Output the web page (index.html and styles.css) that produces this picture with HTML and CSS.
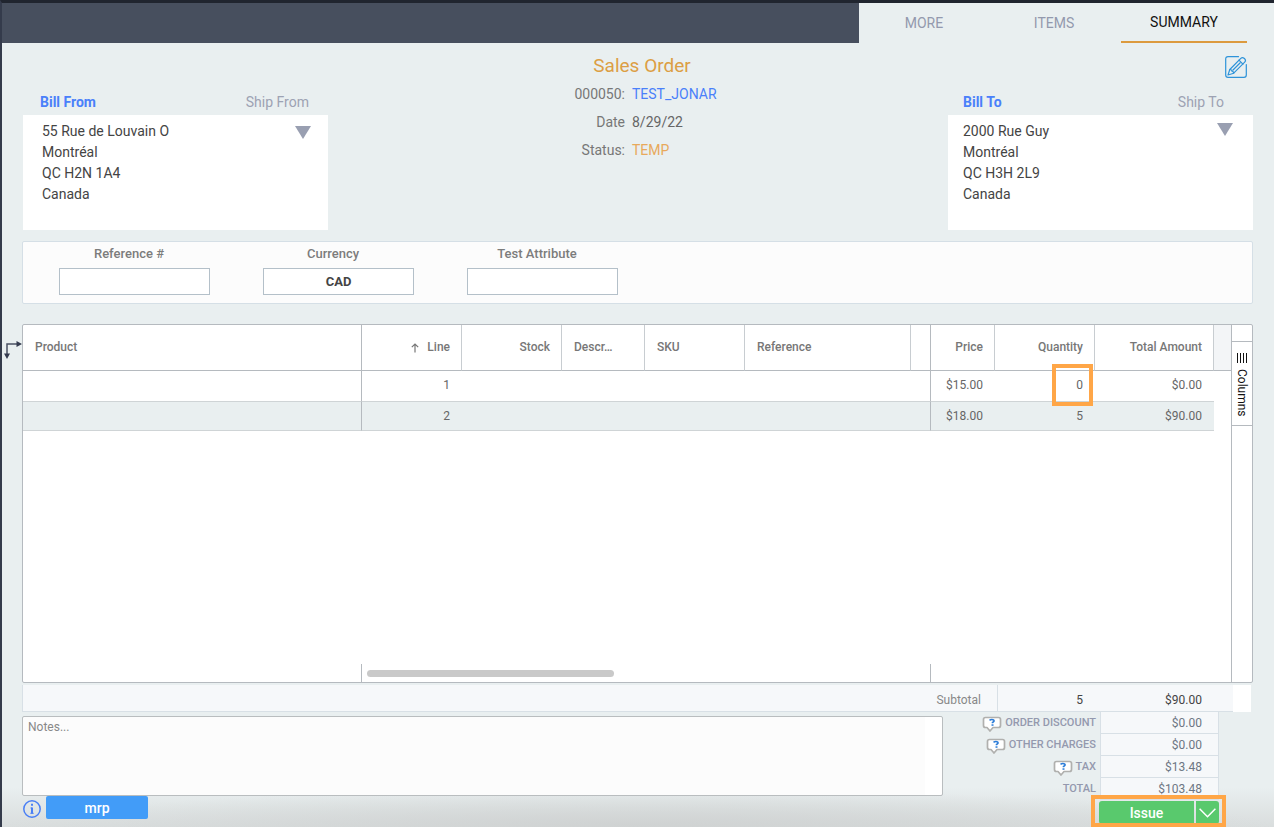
FILE: index.html
```html
<!DOCTYPE html>
<html lang="en">
<head>
<meta charset="utf-8">
<meta name="viewport" content="width=device-width, initial-scale=1">
<title>Sales Order</title>
<link rel="stylesheet" href="styles.css">
</head>
<body>
<svg width="0" height="0" class="defs" aria-hidden="true">
  <symbol id="help" viewBox="0 0 20 16">
    <path d="M4 1.500h12.500q2 0 2 2v6q0 2-2 2H11L8 15l-3-3.500H3.500q-2 0-2-2v-6q0-2 2-2z" fill="#fff" stroke="#b0b0ae" stroke-width="1.700" stroke-linejoin="round"/>
    <path d="M7.500 4.200q2.500-1.400 4.300 0 .9 1.200-1.300 2.200v.9" fill="none" stroke="#2b7cd8" stroke-width="1.600"/>
    <path d="M9.500 8.300h2v1.500h-2z" fill="#2b7cd8"/>
  </symbol>
</svg>
<header class="topbar">
  <div class="topbar-fill"></div>
  <nav class="tabs">
    <a class="tab" href="#more">MORE</a>
    <a class="tab" href="#items">ITEMS</a>
    <a class="tab tab-active" href="#summary">SUMMARY</a>
  </nav>
</header>
<main class="page">
  <section class="order-head">
    <div class="party party-from">
      <div class="party-tabs">
        <button class="party-tab party-tab-active" type="button">Bill From</button>
        <button class="party-tab" type="button">Ship From</button>
      </div>
      <div class="card">
        <address class="address">55 Rue de Louvain O<br>Montréal<br>QC H2N 1A4<br>Canada</address>
        <button class="card-toggle" type="button" aria-label="Choose billing address"></button>
      </div>
    </div>
    <div class="order-info">
      <h1 class="title">Sales Order</h1>
      <dl class="facts">
        <dt>000050:</dt><dd><a class="customer" href="#customer">TEST_JONAR</a></dd>
        <dt>Date</dt><dd>8/29/22</dd>
        <dt>Status:</dt><dd class="status">TEMP</dd>
      </dl>
    </div>
    <div class="party party-to">
      <button class="edit" type="button" aria-label="Edit">
        <svg width="22" height="22" viewBox="0 0 22 22" fill="none" stroke="#2e93d9" stroke-width="1.200" stroke-linejoin="round" stroke-linecap="round">
          <path d="M13.500.7H3Q.7.700.7 3v16Q.7 21.300 3 21.300h16q2.300 0 2.300-2.300V8.500"/>
          <path d="M3 19l1.800-5.500L15.800 2.300q1.600-1.600 3.600.2 2 2 .3 3.700L8.700 17.200z"/>
          <path d="M14 4.200l3.900 4M4.800 13.500l1.700.5.700 1.500 1.200.4.300 1.300M15 7L8 14"/>
        </svg>
      </button>
      <div class="party-tabs">
        <button class="party-tab party-tab-active" type="button">Bill To</button>
        <button class="party-tab" type="button">Ship To</button>
      </div>
      <div class="card">
        <address class="address">2000 Rue Guy<br>Montréal<br>QC H3H 2L9<br>Canada</address>
        <button class="card-toggle" type="button" aria-label="Choose customer address"></button>
      </div>
    </div>
  </section>

  <section class="attributes">
    <div class="field"><label class="field-label" for="reference">Reference #</label><input class="field-input" id="reference" type="text"></div>
    <div class="field"><label class="field-label" for="currency">Currency</label><input class="field-input" id="currency" type="text" value="CAD"></div>
    <div class="field"><label class="field-label" for="attribute">Test Attribute</label><input class="field-input" id="attribute" type="text"></div>
  </section>

  <section class="grid">
    <svg class="flow-icon" width="18" height="20" viewBox="0 0 18 20" aria-hidden="true">
      <path d="M3 15V4h10" fill="none" stroke="#4a5163" stroke-width="1.500"/>
      <path d="M12.500 1v6L18 4zM0 13.500h6L3 19z" fill="#343b4f"/>
    </svg>
    <div class="grid-main">
      <table class="lines">
        <colgroup>
          <col><col class="w-100"><col class="w-100"><col class="w-83"><col class="w-100"><col class="w-166"><col class="w-20"><col class="w-64"><col class="w-100"><col class="w-120"><col class="w-17">
        </colgroup>
        <thead>
          <tr>
            <th class="pin">Product</th>
            <th class="num"><svg class="sort" width="8" height="10" viewBox="0 0 8 10" fill="none" stroke="#777" stroke-width="1.200"><path d="M4 9.500V1M.8 4.200L4 1l3.200 3.200"/></svg>Line</th>
            <th class="num">Stock</th><th>Descr…</th><th>SKU</th><th>Reference</th><th class="pin"></th>
            <th class="num">Price</th><th class="num">Quantity</th><th class="num">Total Amount</th><th class="filler"></th>
          </tr>
        </thead>
        <tbody>
          <tr class="row"><td class="pin"></td><td class="num">1</td><td></td><td></td><td></td><td></td><td class="pin"></td><td class="num">$15.00</td><td class="num marked">0</td><td class="num">$0.00</td><td class="gap"></td></tr>
          <tr class="row row-alt"><td class="pin"></td><td class="num">2</td><td></td><td></td><td></td><td></td><td class="pin"></td><td class="num">$18.00</td><td class="num">5</td><td class="num">$90.00</td><td class="gap"></td></tr>
        </tbody>
      </table>
      <div class="scroll-row"><div class="scroll-left"></div><div class="scroll-mid"><div class="scroll-thumb"></div></div><div class="scroll-right"></div></div>
    </div>
    <aside class="side">
      <button class="side-button" type="button">
        <svg width="10" height="10" viewBox="0 0 10 10" fill="#111"><path d="M0 0h1v10H0zM3 0h1v10H3zM6 0h1v10H6zM9 0h1v10H9z"/></svg>
        <span class="side-text">Columns</span>
      </button>
    </aside>
  </section>

  <section class="subtotal">
    <span class="subtotal-label">Subtotal</span>
    <span class="subtotal-qty">5</span>
    <span class="subtotal-sum">$90.00</span>
    <span class="subtotal-end"></span>
  </section>

  <section class="bottom">
    <div class="bottom-left">
      <textarea class="notes" placeholder="Notes..." aria-label="Notes"></textarea>
      <div class="tools">
        <button class="info" type="button" aria-label="Information">
          <svg width="18" height="18" viewBox="0 0 18 18" fill="none" stroke="#4a7ff5"><circle cx="9" cy="9" r="8.200" stroke-width="1.500"/><path d="M9 7.500v6" stroke-width="2"/><path d="M7.500 8H9M7.300 13.300h3.400" stroke-width="1"/><path d="M8 4.800h2" stroke-width="2"/></svg>
        </button>
        <button class="mrp" type="button">mrp</button>
      </div>
    </div>
    <div class="bottom-right">
      <dl class="totals">
        <dt><svg class="help" width="20" height="16"><use href="#help"/></svg>ORDER DISCOUNT</dt><dd>$0.00</dd>
        <dt><svg class="help" width="20" height="16"><use href="#help"/></svg>OTHER CHARGES</dt><dd>$0.00</dd>
        <dt><svg class="help" width="20" height="16"><use href="#help"/></svg>TAX</dt><dd>$13.48</dd>
        <dt>TOTAL</dt><dd>$103.48</dd>
      </dl>
      <div class="actions">
        <button class="issue" type="button">Issue</button>
        <button class="issue-more" type="button" aria-label="More actions">
          <svg width="17" height="10" viewBox="0 0 17 10" fill="none" stroke="#fff" stroke-width="1.500"><path d="M.6.800l7.900 8 7.900-8"/></svg>
        </button>
      </div>
    </div>
  </section>
</main>
</body>
</html>
```
FILE: styles.css
```css
* { box-sizing: border-box; }
body {
  margin: 0;
  min-height: 100vh;
  display: flex;
  flex-direction: column;
  border-top: 3px solid #20252f;
  border-left: 2px solid #343b4b;
  font-family: Roboto, "Liberation Sans", sans-serif;
  font-size: 14px;
  color: #444;
  background:
    radial-gradient(ellipse 50% 38px at 50% 100%, #cfd2d2 0%, #cfd2d200 100%),
    linear-gradient(to top, #d9dddd 0, #e9eff0 40px);
}
button { margin: 0; padding: 0; border: 0; background: none; font: inherit; color: inherit; cursor: pointer; }
dl, dd, h1 { margin: 0; }
.defs { position: absolute; }

.topbar { display: flex; height: 40px; }
.topbar-fill { flex: 1; background: #474f5e; }
.tabs { display: flex; gap: 4px; padding: 0 27px 0 2px; }
.tab {
  width: 126px;
  border-bottom: 2px solid transparent;
  line-height: 40px;
  text-align: center;
  text-decoration: none;
  color: #9399ad;
}
.tab-active { border-color: #dc9a3e; color: #111; line-height: 38px; }

.page { flex: 1; display: flex; flex-direction: column; padding: 0 21px 0 20px; }

.order-head { display: flex; align-items: flex-end; padding-left: 1px; }
.party { width: 305px; display: flex; flex-direction: column; }
.party-tabs { display: flex; justify-content: space-between; padding: 0 19px 0 17px; line-height: 26px; }
.party-tab { color: #9da2b3; }
.party-tab-active { color: #4a80fa; font-weight: 700; }
.party-to .party-tabs { padding: 0 29px 0 15px; }
.card { display: flex; justify-content: space-between; align-items: flex-start; height: 115px; padding: 6px 17px 0 19px; background: #fff; }
.party-to .card { padding: 6px 20px 0 15px; }
.address { font-style: normal; line-height: 21px; }
.card-toggle {
  width: 16px;
  height: 13px;
  margin-top: 5px;
  background: #999fb1;
  clip-path: polygon(0 0, 100% 0, 50% 100%);
}
.party-to .card-toggle { margin-top: 2px; }
.edit { align-self: flex-end; width: 22px; height: 22px; margin: 13px 6px 11px 0; }
.edit svg, .info svg, .issue-more svg { display: block; }

.order-info { flex: 1; align-self: flex-start; padding-top: 10px; }
.title { padding-left: 8px; font-size: 19px; font-weight: 400; line-height: 26px; text-align: center; color: #dc9e44; }
.facts { display: grid; grid-template-columns: 1fr 1fr; column-gap: 7px; padding: 1px 19px 0 0; line-height: 28px; color: #666; }
.facts dt { text-align: right; color: #777; }
.customer { color: #4a80fa; text-decoration: none; }
.facts .status { color: #e8a95b; }

.attributes { display: flex; gap: 53px; margin-top: 11px; padding: 2px 36px 8px; border: 1px solid #d5dfe6; background: #fcfcfc; border-radius: 2px; }
.field { display: flex; flex-direction: column; width: 151px; }
.field-label { padding-right: 11px; line-height: 20px; margin-bottom: 4px; text-align: center; font-size: 13px; font-weight: 500; color: #7c7c7c; }
.field-input { width: 100%; height: 27px; padding: 0 4px; border: 1px solid #b4c0c9; background: #fff; font: 700 13px Roboto, "Liberation Sans", sans-serif; text-align: center; color: #444; }

.grid { position: relative; flex: 1; display: flex; margin-top: 20px; border: 1px solid #b5babf; border-radius: 2px; background: #fff; }
.flow-icon { position: absolute; left: -19px; top: 15px; }
.grid-main { flex: 1; display: flex; flex-direction: column; justify-content: space-between; }
.lines { width: 100%; table-layout: fixed; border-collapse: separate; border-spacing: 0; font-size: 12px; color: #666; }
.w-17 { width: 17px; }
.w-20 { width: 20px; }
.w-64 { width: 64px; }
.w-83 { width: 83px; }
.w-100 { width: 100px; }
.w-120 { width: 119px; }
.w-166 { width: 166px; }
.lines th { height: 46px; padding: 0 11px 2px 12px; border-right: 1px solid #c8cdd1; border-bottom: 1px solid #b5babf; font-weight: 500; text-align: left; white-space: nowrap; color: #777; }
.lines td { padding: 0 12px 2px; border-bottom: 1px solid #cfd4d6; }
.lines .pin { border-right: 1px solid #b5babf; }
.lines .num { text-align: right; }
.lines .filler { padding: 0; border-right: 0; background: #f3f5f7; }
.lines .gap { padding: 0; border: 0; background: #fff; }
.row { height: 31px; }
.row-alt { height: 29px; background: #e9eff0; }
.row-alt td { padding-bottom: 0; }
.sort { margin-right: 8px; vertical-align: -2px; }
.marked { position: relative; }
.marked::after { content: ""; position: absolute; inset: -7px 2px -5px 57px; border: 4px solid #ffa647; pointer-events: none; }
.scroll-row { display: flex; height: 18px; }
.scroll-left { flex: 1; border-right: 1px solid #b5babf; }
.scroll-mid { width: 569px; padding: 6px 5px; border-right: 1px solid #b5babf; }
.scroll-thumb { width: 247px; height: 7px; border-radius: 4px; background: #c9c9c9; }
.scroll-right { width: 300px; }

.side { width: 21px; padding-top: 16px; border-left: 1px solid #b5babf; }
.side-button { display: flex; flex-direction: column; align-items: center; gap: 6px; width: 20px; height: 85px; padding-top: 11px; border-top: 1px solid #b5babf; border-bottom: 1px solid #b5babf; font-size: 12px; color: #111; }
.side-text { writing-mode: vertical-rl; line-height: 14px; }

.subtotal { display: flex; height: 27px; margin: 2px 2px 0 0; border-left: 1px solid #d8e0e6; background: #f6f8fa; font-size: 12px; line-height: 30px; text-align: right; }
.subtotal span { border-bottom: 1px solid #d8e0e6; }
.subtotal .subtotal-label { flex: 1; padding-right: 16px; border-right: 1px solid #d8e0e6; color: #888; }
.subtotal .subtotal-qty { width: 85px; }
.subtotal .subtotal-sum { width: 150px; padding-right: 31px; }
.subtotal .subtotal-end { width: 18px; border: 0; background: #fff; }

.bottom { display: flex; }
.bottom-left { flex: 1; padding-top: 4px; }
.notes { display: block; width: 100%; height: 80px; padding: 1px 5px; border: 1px solid #b9bdbf; border-radius: 2px; background: linear-gradient(to left, #fff 17px, #fcfcfc 17px); resize: none; font: 12px/18px Roboto, "Liberation Sans", sans-serif; color: #444; }
.notes::placeholder { color: #888; opacity: 1; }
.tools { display: flex; gap: 5px; padding-left: 1px; }
.info { width: 18px; height: 18px; margin-top: 4px; }
.mrp { width: 102px; height: 23px; border-radius: 2px; background: #429cf8; font-weight: 500; color: #fff; }

.bottom-right { width: 310px; padding-right: 34px; }
.totals { display: grid; grid-template-columns: 1fr 119px; font-size: 12px; line-height: 22px; }
.totals dt { display: flex; align-items: center; justify-content: flex-end; gap: 3px; height: 22px; padding-right: 4px; font-size: 11px; font-weight: 500; color: #9499ae; }
.totals dd { height: 22px; padding-right: 16px; border: solid #d8e0e6; border-width: 0 1px 1px; background: #f6f8fa; text-align: right; color: #6d7683; }
.help { margin-top: 2px; }
.actions { position: relative; display: flex; gap: 2px; width: 120px; height: 23px; margin: 1px 0 3px auto; }
.actions::after { content: ""; position: absolute; inset: -6px -7px -3px -8px; border: 4px solid #ffa647; pointer-events: none; }
.issue { flex: 1; border-radius: 3px 0 0 3px; background: #59c96d; font-weight: 500; color: #fff; }
.issue-more { display: flex; align-items: center; justify-content: center; width: 23px; border-radius: 0 3px 3px 0; background: #59c96d; }
```
